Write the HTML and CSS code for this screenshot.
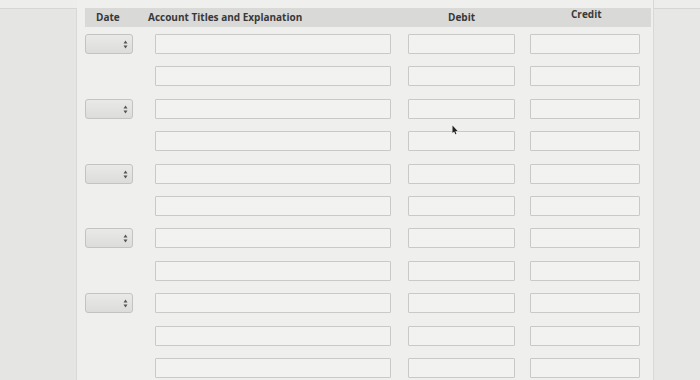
FILE: index.html
```html
<!DOCTYPE html>
<html lang="en">
<head>
    <meta charset="UTF-8">
    <meta name="viewport" content="width=device-width, initial-scale=1.0">
    <title>Journal Entry</title>
    <link rel="stylesheet" href="styles.css">
</head>
<body>
    <div class="top-strip"></div>
    <div class="page">
        <div class="side-left"></div>

        <div class="main">
            <div class="journal-head">
                <span class="col-date">Date</span>
                <span class="col-acct">Account Titles and Explanation</span>
                <span class="col-debit">Debit</span>
                <span class="col-credit">Credit</span>
            </div>

            <!-- entry rows: select on every other row -->
            <div class="journal-rows">
                <div class="row">
                    <div class="date-select"><svg class="spin" viewBox="0 0 5 9"><path d="M2.5 0.5 L4.5 3.5 L0.5 3.5 Z M2.5 8.5 L4.5 5.5 L0.5 5.5 Z"/></svg></div>
                    <input class="acct" type="text"><input class="debit" type="text"><input class="credit" type="text">
                </div>
                <div class="row">
                    <div class="date-empty"></div>
                    <input class="acct" type="text"><input class="debit" type="text"><input class="credit" type="text">
                </div>
                <div class="row">
                    <div class="date-select"><svg class="spin" viewBox="0 0 5 9"><path d="M2.5 0.5 L4.5 3.5 L0.5 3.5 Z M2.5 8.5 L4.5 5.5 L0.5 5.5 Z"/></svg></div>
                    <input class="acct" type="text"><input class="debit" type="text"><input class="credit" type="text">
                </div>
                <div class="row">
                    <div class="date-empty"></div>
                    <input class="acct" type="text"><input class="debit" type="text"><input class="credit" type="text">
                </div>
                <div class="row">
                    <div class="date-select"><svg class="spin" viewBox="0 0 5 9"><path d="M2.5 0.5 L4.5 3.5 L0.5 3.5 Z M2.5 8.5 L4.5 5.5 L0.5 5.5 Z"/></svg></div>
                    <input class="acct" type="text"><input class="debit" type="text"><input class="credit" type="text">
                </div>
                <div class="row">
                    <div class="date-empty"></div>
                    <input class="acct" type="text"><input class="debit" type="text"><input class="credit" type="text">
                </div>
                <div class="row">
                    <div class="date-select"><svg class="spin" viewBox="0 0 5 9"><path d="M2.5 0.5 L4.5 3.5 L0.5 3.5 Z M2.5 8.5 L4.5 5.5 L0.5 5.5 Z"/></svg></div>
                    <input class="acct" type="text"><input class="debit" type="text"><input class="credit" type="text">
                </div>
                <div class="row">
                    <div class="date-empty"></div>
                    <input class="acct" type="text"><input class="debit" type="text"><input class="credit" type="text">
                </div>
                <div class="row">
                    <div class="date-select"><svg class="spin" viewBox="0 0 5 9"><path d="M2.5 0.5 L4.5 3.5 L0.5 3.5 Z M2.5 8.5 L4.5 5.5 L0.5 5.5 Z"/></svg></div>
                    <input class="acct" type="text"><input class="debit" type="text"><input class="credit" type="text">
                </div>
                <div class="row">
                    <div class="date-empty"></div>
                    <input class="acct" type="text"><input class="debit" type="text"><input class="credit" type="text">
                </div>
                <div class="row">
                    <div class="date-empty"></div>
                    <input class="acct" type="text"><input class="debit" type="text"><input class="credit" type="text">
                </div>
            </div>

            <!-- mouse pointer caught in the screenshot -->
            <svg class="pointer" viewBox="0 0 6 10"><path d="M0.5 0.5 L0.5 8 L2.2 6.4 L3.4 9.3 L4.4 8.9 L3.3 6 L5.6 6 Z"/></svg>
        </div>

        <div class="side-right"></div>
    </div>
</body>
</html>
```

FILE: styles.css
```css
* {
    margin: 0;
    padding: 0;
    box-sizing: border-box;
    font-family: "Open Sans", Arial, sans-serif;
}

body {
    background-color: #e6e6e4;
    width: 700px;
    height: 380px;
    overflow: hidden;
    position: relative;
}

.top-strip {
    position: absolute;
    top: 0;
    left: 0;
    right: 0;
    height: 9px;
    background-color: #ededeb;
    border-bottom: 1px solid #d6d6d4;
}

.page {
    display: flex;
    height: 380px;
}

.side-left {
    width: 77px;
    background-color: #e5e5e3;
    border-right: 1px solid #d9d9d7;
}

.main {
    position: relative;
    width: 577px;
    padding: 8px 0 0 8px;
    background-color: #efefed;
    border-right: 1px solid #d8d8d6;
}

.side-right {
    flex: 1;
    background-color: #e7e7e5;
}

.journal-head {
    position: relative;
    height: 19px;
    width: 566px;
    background-color: #d9d9d7;
    color: #383838;
    font-size: 10px;
    font-weight: 700;
    line-height: 19px;
}

.journal-head span {
    position: absolute;
    top: 0;
}

.col-date { left: 11px; }
.col-acct { left: 63px; }
.col-debit { left: 363px; }
.col-credit { left: 486px; top: -3px !important; }

.journal-rows {
    padding-top: 7px;
}

.row {
    display: flex;
    align-items: center;
    height: 20px;
    margin-bottom: 12.4px;
}

.date-select,
.date-empty {
    width: 48px;
    height: 20px;
}

.date-select {
    position: relative;
    border: 1px solid #c3c3c1;
    border-radius: 3px;
    background: linear-gradient(#e9e9e7, #dcdcda);
}

.spin {
    position: absolute;
    right: 4px;
    top: 5px;
    width: 5px;
    height: 9px;
    fill: #555;
}

input[type="text"] {
    height: 20px;
    background-color: #f2f2f0;
    border: 1px solid #c9c9c7;
    border-radius: 1px;
}

.acct {
    width: 236px;
    margin-left: 22px;
}

.debit {
    width: 107px;
    margin-left: 17px;
}

.credit {
    width: 110px;
    margin-left: 15px;
}

.pointer {
    position: absolute;
    left: 375px;
    top: 125px;
    width: 6px;
    height: 10px;
    fill: #222;
}
```
